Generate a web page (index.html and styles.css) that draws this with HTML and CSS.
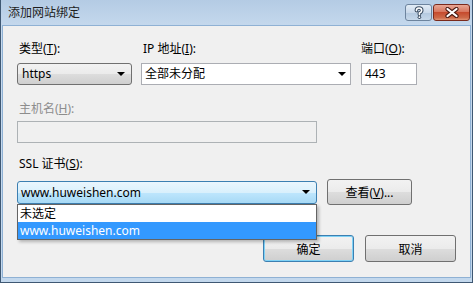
FILE: index.html
```html
<!DOCTYPE html>
<html lang="zh-CN">
<head>
    <meta charset="UTF-8">
    <title>添加网站绑定</title>
    <link rel="stylesheet" href="styles.css">
</head>
<body>
    <div class="window">
        <div class="titlebar">
            <span class="title">添加网站绑定</span>
            <div class="caption-btns">
                <div class="cap help">
                    <svg width="12" height="13" viewBox="-6 -7 12 13">
                        <path d="M-2.6 -2.4 Q-2.6 -5 0 -5 Q2.7 -5 2.7 -2.6 Q2.7 -0.9 0.4 0 L0.4 1.6" fill="none" stroke="#3a4d63" stroke-width="3.6" stroke-linecap="round"/>
                        <circle cx="0.4" cy="4.2" r="1.8" fill="#3a4d63"/>
                        <path d="M-2.6 -2.4 Q-2.6 -5 0 -5 Q2.7 -5 2.7 -2.6 Q2.7 -0.9 0.4 0 L0.4 1.6" fill="none" stroke="#fff" stroke-width="1.6" stroke-linecap="round"/>
                        <circle cx="0.4" cy="4.2" r="0.9" fill="#fff"/>
                    </svg>
                </div>
                <div class="cap close">
                    <svg width="14" height="11" viewBox="-7 -5.5 14 11">
                        <path d="M-4.5 -3.5 L4.5 3.5 M4.5 -3.5 L-4.5 3.5" stroke="#4b1b12" stroke-width="4.2" stroke-linecap="round"/>
                        <path d="M-4.5 -3.5 L4.5 3.5 M4.5 -3.5 L-4.5 3.5" stroke="#fff" stroke-width="2.2" stroke-linecap="round"/>
                    </svg>
                </div>
            </div>
        </div>

        <div class="client">
            <div class="row-top">
                <div class="field f-type">
                    <div class="label">类型(<u>T</u>):</div>
                    <div class="combo">https<span class="arrow"></span></div>
                </div>
                <div class="field f-ip">
                    <div class="label">IP 地址(<u>I</u>):</div>
                    <div class="combo edit">全部未分配<span class="arrow"></span></div>
                </div>
                <div class="field f-port">
                    <div class="label">端口(<u>O</u>):</div>
                    <div class="textbox">443</div>
                </div>
            </div>

            <div class="field f-host disabled">
                <div class="label">主机名(<u>H</u>):</div>
                <div class="textbox"></div>
            </div>

            <div class="field f-ssl">
                <div class="label">SSL 证书(<u>S</u>):</div>
                <div class="ssl-row">
                    <div class="combo-wrap">
                        <div class="combo active">www.huweishen.com<span class="arrow"></span></div>
                        <ul class="droplist">
                            <li>未选定</li>
                            <li class="sel">www.huweishen.com</li>
                        </ul>
                    </div>
                    <div class="btn btn-view">查看(<u>V</u>)...</div>
                </div>
            </div>

            <div class="actions">
                <div class="btn default">确定</div>
                <div class="btn">取消</div>
            </div>
        </div>
    </div>
</body>
</html>
```

FILE: styles.css
```css
* { box-sizing: border-box; margin: 0; padding: 0; }
body { width: 473px; height: 283px; overflow: hidden; background: #c5d9ee; font-family: "Noto Sans", "Noto Sans CJK SC", sans-serif; font-size: 12px; color: #000; }

.window { width: 473px; height: 283px; border-left: 1px solid #3f5873; border-right: 1px solid #3f5873; border-bottom: 1px solid #3f5873; background: linear-gradient(#b4cbe4, #c7daee 30px, #c3d8ed); display: flex; flex-direction: column; }

.titlebar { height: 25px; display: flex; align-items: flex-start; justify-content: space-between; padding-left: 7px; }
.title { font-size: 12px; line-height: 14px; margin-top: 6px; color: #1e1e1e; }
.caption-btns { display: flex; gap: 1px; margin-top: 4px; margin-right: 2px; }
.cap { height: 17px; border-radius: 3px; display: flex; align-items: center; justify-content: center; }
.help { width: 27px; border: 1px solid #6d849e; background: linear-gradient(#e2ecf6, #cad9ea 50%, #b3c8df 51%, #c6d8ea); }
.close { width: 37px; border: 1px solid #7a2a1c; background: linear-gradient(#e8a795, #d7765e 45%, #c64b2e 50%, #cd6a49 85%, #e29576); }

.client { flex: 1; margin: 0 1px 4px 1px; border: 1px solid #8fb1d4; background: #f0f0f0; padding: 15px 14px 0 14px; }

.label { line-height: 16px; padding-left: 2px; margin-bottom: 6px; }
.label u { text-decoration: underline; }

.row-top { display: flex; }
.f-type { width: 115px; margin-right: 9px; }
.f-ip { width: 210px; margin-right: 10px; }
.f-port { width: 56px; }
.f-port .label { padding-left: 0; }

.combo { position: relative; height: 22px; line-height: 20px; padding-left: 4px; border: 1px solid #707070; border-radius: 3px; background: linear-gradient(#f2f2f2, #ebebeb 50%, #dddddd 51%, #cfcfcf); }
.combo.edit { border: 1px solid #abadb3; border-radius: 0; background: #fff; padding-left: 3px; }
.arrow { position: absolute; right: 6px; top: 8px; width: 0; height: 0; border-left: 4px solid transparent; border-right: 4px solid transparent; border-top: 4px solid #000; }
.combo.edit .arrow { right: 4px; }

.textbox { height: 22px; line-height: 20px; padding-left: 3px; border: 1px solid #abadb3; background: #fff; }

.f-host { margin-top: 16px; width: 300px; }
.f-host .label { margin-bottom: 4px; }
.disabled .label { color: #8d8d8d; }
.disabled .textbox { background: #f0f0f0; border-color: #adb2b5; }

.f-ssl { margin-top: 13px; }
.f-ssl .label { margin-bottom: 0; }
.ssl-row { display: flex; align-items: center; gap: 10px; margin-top: 7px; }
.combo-wrap { position: relative; width: 300px; }
.combo.active { height: 23px; line-height: 21px; padding-left: 3px; border-color: #3c7fb1; background: linear-gradient(#eaf6fd, #d9f0fc 50%, #bee6fd 51%, #a7d9f5); }

.droplist { position: absolute; left: 0; top: 100%; width: 300px; list-style: none; background: #fff; border: 1px solid #646464; box-shadow: 2px 2px 3px rgba(0,0,0,0.25); z-index: 2; }
.droplist li { height: 17px; line-height: 17px; padding-left: 2px; }
.droplist li.sel { background: #3399ff; color: #fff; }

.btn { height: 26px; display: flex; align-items: center; justify-content: center; border: 1px solid #707070; border-radius: 3px; background: linear-gradient(#f2f2f2, #ebebeb 50%, #dddddd 51%, #cfcfcf); }
.btn-view { width: 85px; }

.actions { display: flex; justify-content: flex-end; gap: 11px; margin-top: 30px; }
.actions .btn { width: 91px; height: 27px; }
.btn.default { border-color: #3c7fb1; box-shadow: inset 0 0 0 1px #7fd2f6; }
```
